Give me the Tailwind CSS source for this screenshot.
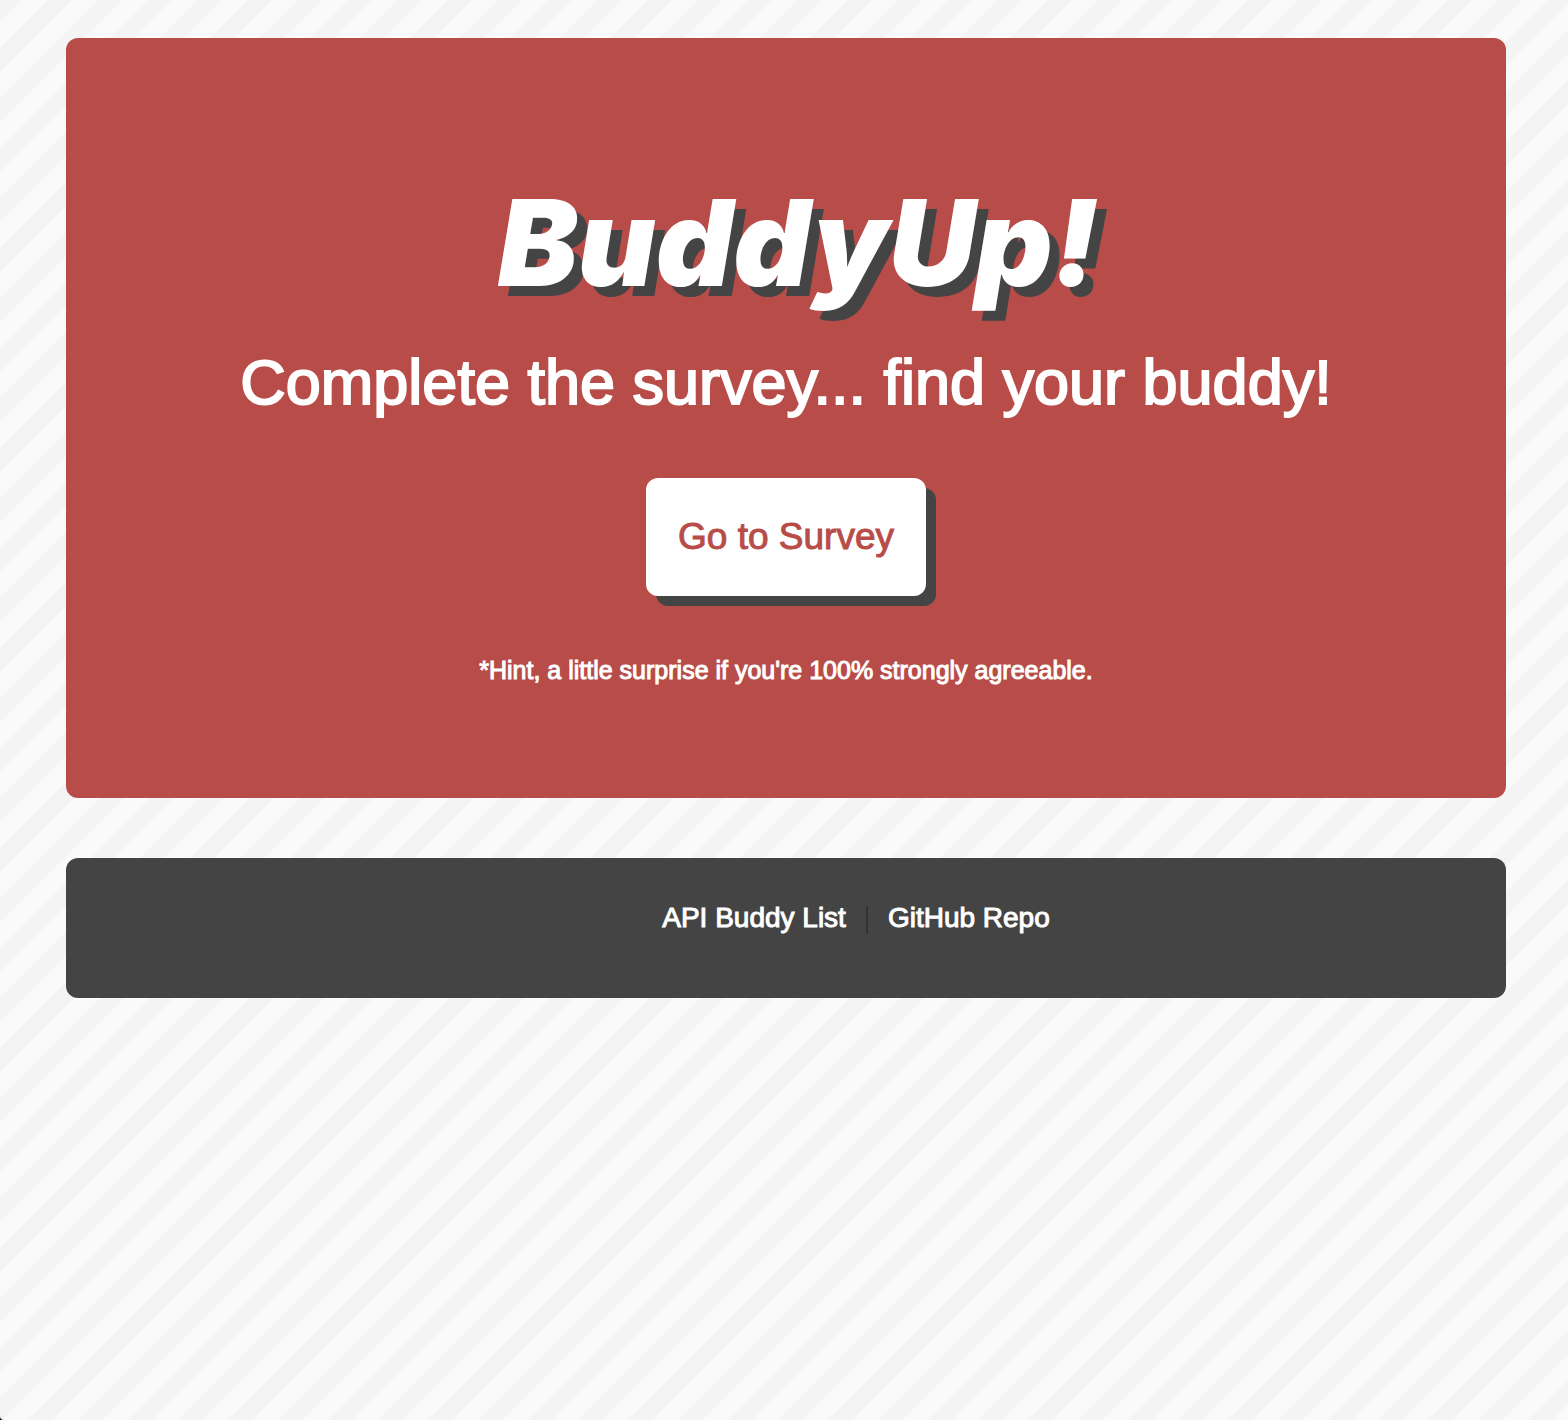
<!DOCTYPE html>
<html lang="en" class="bg-black">
<head>
<meta charset="utf-8">
<meta name="viewport" content="width=device-width, initial-scale=1">
<title>BuddyUp!</title>
<script src="https://cdn.jsdelivr.net/npm/@tailwindcss/browser@4"></script>
</head>
<body class="flex min-h-screen flex-col gap-[60px] rounded-bl-sm bg-[linear-gradient(135deg,#f4f4f4_25%,#fafafa_25%_50%,#f4f4f4_50%_75%,#fafafa_75%)] bg-[length:50px_50px] bg-[position:-2px_0] pt-[38px] pr-[62px] pb-10 pl-[66px] font-['Liberation_Sans',Arial,sans-serif]">
  <main class="flex flex-col items-center rounded-xl bg-[#b84c48] px-8 pt-[130px] pb-[110px] text-center text-white">
    <h1 class="pl-6 font-[Inter,sans-serif] text-[120px] leading-[150px] font-black italic [text-shadow:10px_10px_0_#444]">BuddyUp!</h1>
    <p class="mt-6 mb-0.5 text-[63px] leading-[80px] [font-variant-ligatures:none] [-webkit-text-stroke:2px_white]">Complete the survey... find your buddy!</p>
    <button type="button" class="mt-[54px] h-[118px] w-[280px] rounded-xl bg-white text-[37px] text-[#b84c48] shadow-[10px_10px_0_#444] [-webkit-text-stroke:1px_#b84c48]">Go to Survey</button>
    <p class="mt-14 text-[25px] leading-[36px] [-webkit-text-stroke:1px_white]">*Hint, a little surprise if you're 100% strongly agreeable.</p>
  </main>
  <footer class="rounded-xl bg-[#444] pt-10 pb-[60px] pl-[140px]">
    <nav aria-label="Footer" class="flex items-center justify-center text-[28px] leading-[40px] text-white [-webkit-text-stroke:1px_white]">
      <a href="#" class="pr-5">API Buddy List</a>
      <span class="mt-1 h-7 w-0.5 bg-[#333]"></span>
      <a href="#" class="pl-5">GitHub Repo</a>
    </nav>
  </footer>
</body>
</html>
